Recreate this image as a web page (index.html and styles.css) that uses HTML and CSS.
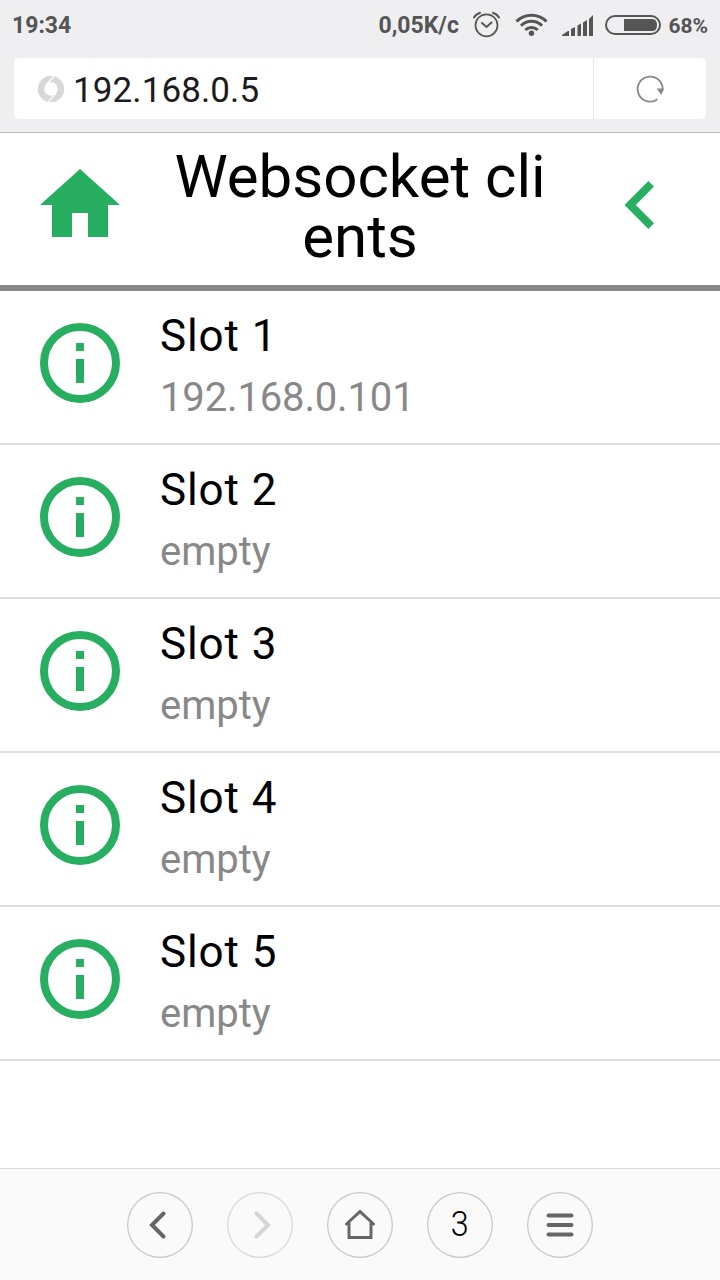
FILE: index.html
```html
<!DOCTYPE html>
<html lang="en">
<head>
<meta charset="utf-8">
<title>Websocket clients</title>
<link rel="stylesheet" href="styles.css">
</head>
<body>
<svg class="defs" width="0" height="0" aria-hidden="true">
  <symbol id="info" viewBox="0 0 80 80">
    <circle cx="40" cy="40" r="36" fill="none" stroke="currentColor" stroke-width="8"/>
    <path d="M36 20h8v8h-8zM36 36h8v24h-8z" fill="currentColor"/>
  </symbol>
</svg>
<div class="screen">
  <div class="statusbar">
    <span class="clock">19:34</span>
    <span class="speed">0,05K/c</span>
    <svg class="status-icons" width="192" height="50" viewBox="470 0 192 50">
      <g fill="none" stroke="#555" stroke-width="1.7" stroke-linecap="round">
        <circle cx="486.500" cy="25.300" r="11"/>
        <path d="M482 23l4.500 4 5-4.500" stroke-width="2"/>
        <path d="M474 17.500q2-3.500 6-4.800M499 17.500q-2-3.500-6-4.800" stroke-width="2"/>
      </g>
      <g fill="none" stroke="#555" stroke-width="3">
        <path d="M516.500 21.500a21 21 0 0 1 30 0"/>
        <path d="M521 25.800a14.500 14.500 0 0 1 21 0"/>
        <path d="M525.300 30a8.700 8.700 0 0 1 12.400 0"/>
      </g>
      <circle cx="531.500" cy="33.300" r="2.700" fill="#555"/>
      <path d="M562 36v-1l6-4h1v5zM571 29l4-2v9h-4zM577.500 25.500l3.500-2v12.500h-3.500zM583 22.500l4-2.500v16h-4zM589 19l4-4v21h-4z" fill="#555"/>
      <rect x="606" y="16" width="54" height="18" rx="9" fill="none" stroke="#555" stroke-width="2"/>
      <path d="M624 19h28q5 0 5 6t-5 6h-28z" fill="#555"/>
    </svg>
    <span class="battery">68%</span>
  </div>
  <div class="addressbar">
    <div class="url">
      <svg width="28" height="28" viewBox="0 0 28 28">
        <circle cx="14" cy="14" r="10" fill="none" stroke="#d7d8da" stroke-width="6.500"/>
        <path d="M18 0L9.500 9.500M18.500 18.500L10.500 28" stroke="#fff" stroke-width="1.300"/>
      </svg>
      <span>192.168.0.5</span>
    </div>
    <div class="reload">
      <svg width="30" height="30" viewBox="0 0 30 30">
        <path d="M22.500 25.200A12.500 12.500 0 1 1 27.500 17" fill="none" stroke="#888" stroke-width="1.800"/>
        <path d="M21.500 14.500h7.300l-2.300 6.500z" fill="#888"/>
      </svg>
    </div>
  </div>
  <header class="header">
    <svg class="home" width="80" height="80" viewBox="0 0 80 80"><path d="M40 4L80 40H68V72H48V48H32V72H12V40H0z" fill="currentColor"/></svg>
    <h1 class="title">Websocket cli<br>ents</h1>
    <svg class="back" width="80" height="80" viewBox="0 0 80 80"><path d="M48.400 16L54 21.600 35.800 40 54 58.200 48.400 64 24.500 40z" fill="currentColor"/></svg>
  </header>
  <main class="list">
    <div class="row"><svg class="info"><use href="#info"/></svg><div><div class="name">Slot 1</div><div class="value address">192.168.0.101</div></div></div>
    <div class="row"><svg class="info"><use href="#info"/></svg><div><div class="name">Slot 2</div><div class="value">empty</div></div></div>
    <div class="row"><svg class="info"><use href="#info"/></svg><div><div class="name">Slot 3</div><div class="value">empty</div></div></div>
    <div class="row"><svg class="info"><use href="#info"/></svg><div><div class="name">Slot 4</div><div class="value">empty</div></div></div>
    <div class="row"><svg class="info"><use href="#info"/></svg><div><div class="name">Slot 5</div><div class="value">empty</div></div></div>
  </main>
  <nav class="toolbar">
    <div class="btn"><svg viewBox="0 0 66 66"><path d="M36.500 21.500L25 33l11.500 11.500" stroke-width="4"/></svg></div>
    <div class="btn disabled"><svg viewBox="0 0 66 66"><path d="M29.500 21.500L41 33 29.500 44.500" stroke-width="4"/></svg></div>
    <div class="btn"><svg viewBox="0 0 66 66"><path d="M19.500 32L33 19.500 46.500 32M22 31v14.500h22V31" stroke-width="3"/></svg></div>
    <div class="btn tabs"><span>3</span></div>
    <div class="btn"><svg viewBox="0 0 66 66"><path d="M21.500 23.500h23M21.500 33h23M21.500 42.500h23" stroke-width="4"/></svg></div>
  </nav>
</div>
</body>
</html>
```
FILE: styles.css
```css
* { box-sizing: border-box; }
body { margin: 0; font-family: Roboto, "Liberation Sans", sans-serif; background: #fff; color: #000; }
svg { display: block; flex: none; }
.defs { position: absolute; }
.screen { width: 720px; height: 1280px; display: flex; flex-direction: column; overflow: hidden; }
.statusbar { height: 50px; padding: 0 12px; display: flex; align-items: center; background: #efeff1; color: #555; font-weight: 700; font-size: 23px; white-space: nowrap; }
.clock { width: 367px; }
.speed { width: 92px; }
.battery { margin-left: 6px; font-size: 21px; padding-top: 1px; }
.addressbar { height: 83px; padding: 8px 14px 13px; display: flex; background: #efeff1; border-bottom: 1px solid #bbb; }
.url { flex: 1; display: flex; align-items: center; gap: 8px; padding-left: 23px; background: #fff; border-radius: 5px 0 0 5px; font-size: 35px; letter-spacing: 0.1px; color: #1c1c1c; }
.url span { padding-top: 3px; }
.reload { width: 113px; display: flex; align-items: center; justify-content: center; background: #fff; border-left: 1px solid #e8e8ea; border-radius: 0 5px 5px 0; }
.header { height: 158px; padding: 0 40px; display: flex; justify-content: space-between; border-bottom: 6px solid #888; }
.home, .back { color: #27ae60; margin-top: 32px; }
.title { margin: 14px 0 0; font-size: 60px; line-height: 60px; font-weight: 400; text-align: center; white-space: nowrap; }
.row { height: 154px; padding: 0 40px; display: flex; gap: 40px; border-bottom: 2px solid #ddd; }
.info { width: 80px; height: 80px; margin-top: 32px; color: #27ae60; }
.name { margin-top: 20px; font-size: 44px; line-height: 50px; letter-spacing: 0.9px; }
.value { margin-top: 13px; font-size: 40px; line-height: 48px; color: #888; }
.address { letter-spacing: -0.15px; }
.toolbar { height: 112px; margin-top: auto; display: flex; align-items: center; justify-content: center; gap: 34px; background: #fafafa; border-top: 1px solid #ddd; }
.btn { width: 66px; height: 66px; border-radius: 50%; box-shadow: inset 0 0 0 1.3px #c8c8c8; color: #666; }
.btn svg { fill: none; stroke: currentColor; stroke-linecap: round; stroke-linejoin: miter; }
.disabled { color: #d5d5d5; box-shadow: inset 0 0 0 1.3px #d8d8d8; }
.tabs { display: flex; align-items: center; justify-content: center; color: #000; font-size: 35px; font-weight: 400; }
.tabs span { transform: scaleX(0.92); font-weight: 300; }
```
